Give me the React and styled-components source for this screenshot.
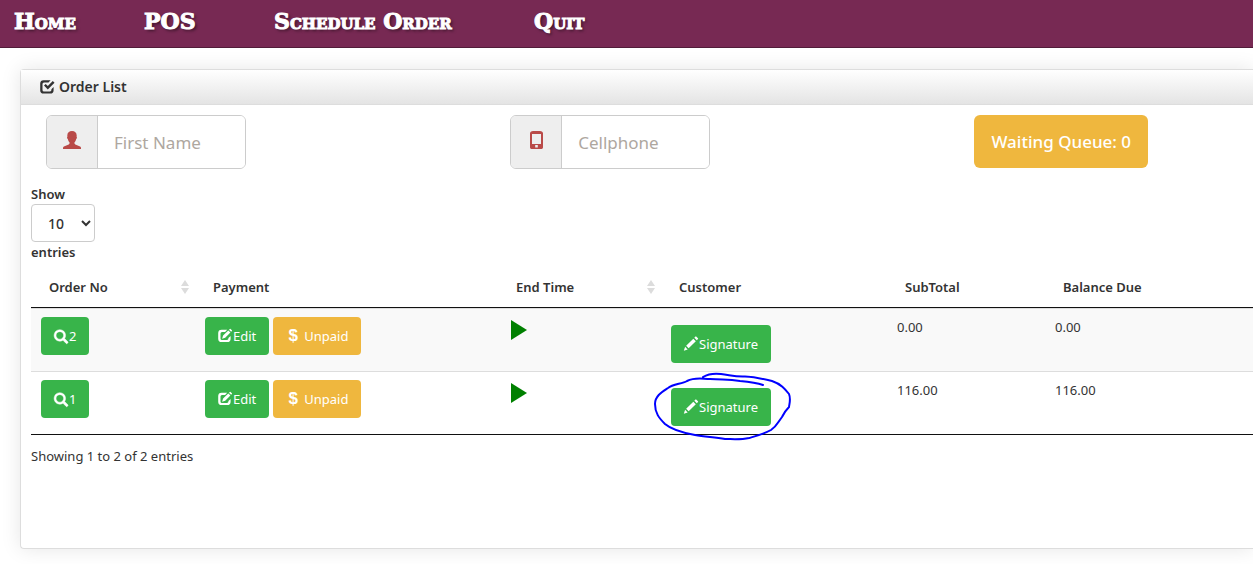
import React, { useState } from "react"
import styled, { createGlobalStyle } from "styled-components"

const colorPlum = "#772953"
const colorPlumDark = "#511c39"
const colorGreen = "#38b44a"
const colorYellow = "#efb73e"
const colorRed = "#b94a48"
const colorText = "#333333"
const colorBorder = "#cccccc"

const GlobalStyle = createGlobalStyle`
  * {
    box-sizing: border-box;
  }

  body {
    margin: 0;
    background: #ffffff;
    color: ${colorText};
    font-family: "Noto Sans", "Open Sans", sans-serif;
    font-size: 13px;
    line-height: 20px;
    overflow-x: hidden;
  }

  button,
  input,
  select {
    font-family: inherit;
  }
`

const Navbar = styled.nav`
  display: grid;
  grid-template-columns: 130px 130px 260px 130px;
  align-items: center;
  height: 48px;
  padding: 0 14px 6px;
  background: ${colorPlum};
  border-bottom: 1px solid ${colorPlumDark};
`

const NavLink = styled.a`
  color: #ffffff;
  font-family: "DejaVu Serif", serif;
  font-size: 22px;
  font-weight: bold;
  font-variant: small-caps;
  line-height: 24px;
  text-decoration: none;
  text-shadow: 2px 2px 3px rgba(0, 0, 0, 0.5);
  -webkit-text-stroke: 1px #ffffff;
`

const Panel = styled.section`
  min-height: 480px;
  margin: 21px 0 15px 20px;
  border: 1px solid #dddddd;
  border-right: 0;
  border-radius: 4px 0 0 4px;
  box-shadow: 0 0 20px rgba(0, 0, 0, 0.1);
`

const PanelHeader = styled.header`
  display: flex;
  align-items: center;
  gap: 4px;
  height: 35px;
  padding: 0 19px;
  border-bottom: 1px solid #dddddd;
  background: linear-gradient(#ffffff, #e4e4e4);
`

const PanelTitle = styled.h2`
  margin: 0;
  font-size: 14px;
  font-weight: 600;
`

const PanelBody = styled.div`
  padding: 10px 0 0 10px;
`

const Filters = styled.div`
  display: grid;
  grid-template-columns: 5fr 5fr 3fr;
  align-items: start;
  padding-left: 15px;
`

const InputGroup = styled.label`
  display: flex;
  width: 200px;
  height: 54px;
  border: 1px solid ${colorBorder};
  border-radius: 6px;
  overflow: hidden;
`

const Addon = styled.span`
  display: flex;
  align-items: center;
  justify-content: center;
  flex: 0 0 51px;
  padding-bottom: 4px;
  color: ${colorRed};
  background: #eeeeee;
  border-right: 1px solid ${colorBorder};
`

const TextInput = styled.input`
  flex: 1;
  min-width: 0;
  padding: 0 16px;
  border: 0;
  outline: 0;
  font-size: 17px;

  &::placeholder {
    color: #aea79f;
  }
`

const Button = styled.button`
  display: inline-flex;
  align-items: center;
  justify-content: center;
  gap: 1px;
  height: ${props => (props.$large ? "53px" : "38px")};
  padding: 0 ${props => (props.$large ? "17px" : "13px")};
  border: 0;
  border-radius: ${props => (props.$large ? "6px" : "4px")};
  color: #ffffff;
  background: ${props => (props.$warning ? colorYellow : colorGreen)};
  font-size: ${props => (props.$large ? "17px" : "13px")};
  line-height: 20px;
  white-space: nowrap;
  cursor: pointer;
`

const QueueButton = styled(Button)`
  justify-self: start;
  font-weight: 500;
`

const LengthLabel = styled.label`
  display: flex;
  flex-direction: column;
  align-items: flex-start;
  width: 64px;
  margin-top: 15px;
  font-weight: 600;
`

const LengthSelect = styled.select`
  width: 64px;
  height: 38px;
  padding: 8px 0 8px 12px;
  border: 1px solid ${colorBorder};
  border-radius: 4px;
  background: #ffffff;
  color: ${colorText};
  font-size: 14px;
  font-weight: 500;
`

const Table = styled.table`
  width: 100%;
  margin-top: 5px;
  table-layout: fixed;
  border-collapse: separate;
  border-spacing: 0;
  border-bottom: 1px solid #111111;
`

const Col = styled.col`
  width: ${props => props.$width};
`

const HeadCell = styled.th`
  height: 41px;
  padding: 0 6px 0 18px;
  border-bottom: 1px solid #111111;
  font-weight: 600;
  text-align: left;
`

const HeadContent = styled.div`
  display: flex;
  align-items: center;
  justify-content: space-between;
`

const Row = styled.tr`
  background: ${props => (props.$striped ? "#f9f9f9" : "#ffffff")};
`

const Cell = styled.td`
  padding: 8px 10px;
  border-top: 1px solid #dddddd;
  vertical-align: top;
`

const ButtonRow = styled.div`
  display: flex;
  gap: 4px;
`

const SignatureBox = styled.div`
  position: relative;
  width: fit-content;
  margin-top: 8px;
`

const Marking = styled.svg`
  position: absolute;
  top: -16px;
  left: -16px;
  overflow: visible;
  pointer-events: none;
`

const Dollar = styled.span`
  width: 14px;
  margin-right: 3px;
  font-family: "Liberation Sans", sans-serif;
  font-size: 17px;
  font-weight: bold;
  text-align: center;
`

const PlayButton = styled.button`
  display: block;
  margin: 3px 0 0 3px;
  padding: 0;
  border: 0;
  background: none;
  color: #008000;
  cursor: pointer;
`

const TableInfo = styled.p`
  margin: 11px 0 0;
`

const Glyph = styled.svg`
  display: block;
  flex: none;
  fill: currentColor;
  overflow: visible;
`

const SearchIcon = () => (
  <Glyph width="14" height="14" viewBox="0 0 1200 1200" aria-hidden="true">
    <path
      transform="translate(0 1250) scale(1 -1)"
      d="M500 1191q100 0 191 -39t156.5 -104.5t104.5 -156.5t39 -191l-1 -2l1 -5q0 -141 -78 -262l275 -274q23 -26 22.5 -44.5t-22.5 -42.5l-59 -58q-26 -20 -46.5 -20t-39.5 20l-275 274q-119 -77 -261 -77l-5 1l-2 -1q-100 0 -191 39t-156.5 104.5t-104.5 156.5t-39 191t39 191t104.5 156.5t156.5 104.5t191 39zM500 1022q-88 0 -162 -43t-117 -117t-43 -162t43 -162t117 -117t162 -43t162 43t117 117t43 162t-43 162t-117 117t-162 43z"
      stroke="currentColor"
      strokeWidth="40"
    />
  </Glyph>
)

const PencilIcon = () => (
  <Glyph width="14" height="14" viewBox="0 0 1200 1200" aria-hidden="true">
    <path
      transform="translate(0 1160) scale(1 -1)"
      d="M1011 1210q19 0 33 -13l153 -153q13 -14 13 -33t-13 -33l-99 -92l-214 214l95 96q13 14 32 14zM1013 800l-615 -614l-214 214l614 614zM317 96l-333 -112l110 335z"
    />
  </Glyph>
)

const EditIcon = () => (
  <Glyph width="14" height="14" viewBox="0 0 14 14" aria-hidden="true">
    <path d="M9.2 .7H3.6A3.4 3.4 0 0 0 .2 4.1v5.6a3.4 3.4 0 0 0 3.4 3.4h5.6a3.4 3.4 0 0 0 3.4-3.4V7.1l-2.200 2v.4a1.400 1.400 0 0 1-1.400 1.400H4a1.500 1.500 0 0 1-1.500-1.500V4.500A1.500 1.500 0 0 1 4 3h3.100z" />
    <path d="M10.300 1.400l2.100 2.100-5.200 5.200-3.100 1 1-3.100zM11 .7l.8-.8q.4-.4.8 0l1.300 1.300q.4.4 0 .8l-.8.8z" />
  </Glyph>
)

const CheckIcon = () => (
  <Glyph width="15" height="14" viewBox="0 0 15 14" aria-hidden="true">
    <path d="M10.600 .2H3.600A3.400 3.400 0 0 0 .2 3.600v6.600a3.400 3.400 0 0 0 3.400 3.400h6.600a3.400 3.400 0 0 0 3.400-3.400V7l-2.200 2.200v.8a1.400 1.400 0 0 1-1.400 1.400H4a1.500 1.500 0 0 1-1.500-1.500V4A1.500 1.500 0 0 1 4 2.500h4.500z" />
    <path d="M12.800 1l1.700 1.700-6.700 6.700-3.800-3.800 1.700-1.700 2.100 2.100z" />
  </Glyph>
)

const UserIcon = () => (
  <Glyph width="18" height="18" viewBox="0 0 18 18" aria-hidden="true">
    <path d="M9 0c2.800 0 4.700 1.600 4.700 4.400 0 .6-.1 1-.1 1.400.5.1.5 1.900-.4 2.300-.3 1.600-1 2.500-1.700 3.200v1.200c0 .5.3.8.8 1l4.200 1.800c1 .4 1.500 1 1.500 1.700v1H0v-1c0-.7.5-1.300 1.500-1.700l4.200-1.800c.5-.2.8-.5.8-1v-1.200c-.7-.7-1.400-1.600-1.700-3.200-.9-.4-.9-2.200-.4-2.300 0-.4-.1-.8-.1-1.400C4.300 1.600 6.200 0 9 0z" />
  </Glyph>
)

const PhoneIcon = () => (
  <Glyph width="13" height="18" viewBox="0 0 13 18" aria-hidden="true">
    <path
      fillRule="evenodd"
      d="M3.200 0H9.800Q13 .2 13 2.600V16.600Q13 18 11.600 18H1.400Q0 18 0 16.600V2.600Q0 .2 3.200 0zM2 3V13H11V3zM5.200 14V16.600H7.800V14z"
    />
  </Glyph>
)

const SortIcon = () => (
  <Glyph width="8" height="14" viewBox="0 0 8 14" aria-hidden="true">
    <path fill="#dcdcdc" d="M4 0l4 6H0zM4 14l4-6H0z" />
  </Glyph>
)

const PlayIcon = () => (
  <Glyph width="16" height="20" viewBox="0 0 16 20" aria-hidden="true">
    <path d="M0 0l16 10L0 20z" />
  </Glyph>
)

const HandCircle = () => (
  <Marking width="136" height="68" viewBox="0 0 136 68" aria-hidden="true">
    <path
      d="M48 5C53 2 58 1 66 2C75 3 80 5 90 4.500C101 5 109 7 117 9C126 12 130 17 134 22C136 27 134.500 31 134 35C131 38 129 41 127 45C123 50 122 54 116 58C109 62 101 64 94 66C85 68 77 67 70 67C59 65 50 65 40 63C29 61 17 58 10 52C4 46 0 41 0 32C0 24 7 20 13 16C18 12 27 12 32 9C40 5 47 7 55 7C69 8 73 7 85 9C95 10 102 11 108 13"
      fill="none"
      stroke="#0000ff"
      strokeWidth="2"
      strokeLinecap="round"
    />
  </Marking>
)

const columns = [
  { title: "Order No", width: "164px", sortable: true },
  { title: "Payment", width: "303px" },
  { title: "End Time", width: "163px", sortable: true },
  { title: "Customer", width: "226px" },
  { title: "SubTotal", width: "158px" },
  { title: "Balance Due", width: "auto" },
]

const orders = [
  { id: 2, subTotal: "0.00", balance: "0.00" },
  { id: 1, subTotal: "116.00", balance: "116.00", marked: true },
]

const OrderRow = ({ order, striped }) => (
  <Row $striped={striped}>
    <Cell>
      <Button type="button">
        <SearchIcon />
        {order.id}
      </Button>
    </Cell>
    <Cell>
      <ButtonRow>
        <Button type="button">
          <EditIcon />
          Edit
        </Button>
        <Button type="button" $warning>
          <Dollar>$</Dollar>
          Unpaid
        </Button>
      </ButtonRow>
    </Cell>
    <Cell>
      <PlayButton type="button" aria-label="Start">
        <PlayIcon />
      </PlayButton>
    </Cell>
    <Cell>
      <SignatureBox>
        <Button type="button">
          <PencilIcon />
          Signature
        </Button>
        {order.marked && <HandCircle />}
      </SignatureBox>
    </Cell>
    <Cell>{order.subTotal}</Cell>
    <Cell>{order.balance}</Cell>
  </Row>
)

const App = () => {
  const [pageSize, setPageSize] = useState("10")

  return (
    <>
      <GlobalStyle />
      <Navbar>
        <NavLink href="#home">Home</NavLink>
        <NavLink href="#pos">POS</NavLink>
        <NavLink href="#schedule">Schedule Order</NavLink>
        <NavLink href="#quit">Quit</NavLink>
      </Navbar>
      <Panel>
        <PanelHeader>
          <CheckIcon />
          <PanelTitle>Order List</PanelTitle>
        </PanelHeader>
        <PanelBody>
          <Filters>
            <InputGroup>
              <Addon>
                <UserIcon />
              </Addon>
              <TextInput type="text" placeholder="First Name" aria-label="First Name" />
            </InputGroup>
            <InputGroup>
              <Addon>
                <PhoneIcon />
              </Addon>
              <TextInput type="tel" placeholder="Cellphone" aria-label="Cellphone" />
            </InputGroup>
            <QueueButton type="button" $large $warning>
              Waiting Queue: 0
            </QueueButton>
          </Filters>
          <LengthLabel>
            Show
            <LengthSelect value={pageSize} onChange={e => setPageSize(e.target.value)}>
              <option>10</option>
              <option>25</option>
              <option>50</option>
              <option>100</option>
            </LengthSelect>
            entries
          </LengthLabel>
          <Table>
            <colgroup>
              {columns.map(column => (
                <Col key={column.title} $width={column.width} />
              ))}
            </colgroup>
            <thead>
              <tr>
                {columns.map(column => (
                  <HeadCell key={column.title} scope="col">
                    <HeadContent>
                      {column.title}
                      {column.sortable && <SortIcon />}
                    </HeadContent>
                  </HeadCell>
                ))}
              </tr>
            </thead>
            <tbody>
              {orders.map((order, index) => (
                <OrderRow key={order.id} order={order} striped={index % 2 === 0} />
              ))}
            </tbody>
          </Table>
          <TableInfo>Showing 1 to 2 of 2 entries</TableInfo>
        </PanelBody>
      </Panel>
    </>
  )
}

export default App
